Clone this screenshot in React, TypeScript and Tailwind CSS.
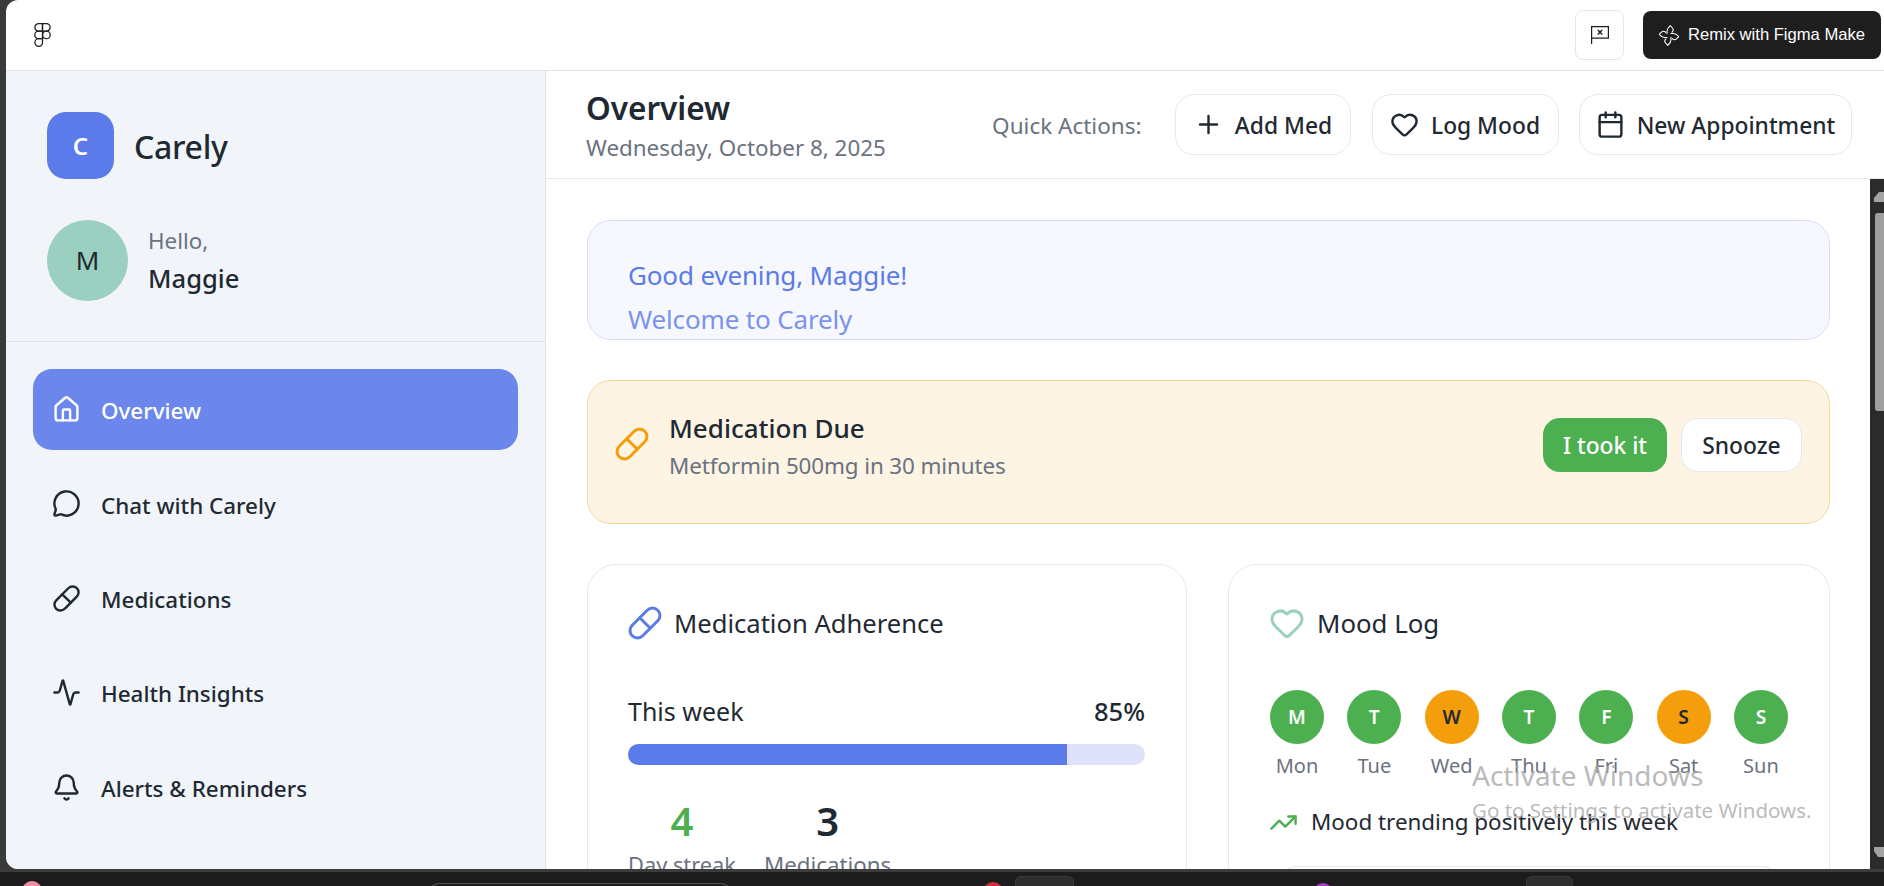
import React from 'react'
import {
  Activity,
  Bell,
  Calendar,
  Heart,
  House,
  MessageCircle,
  Pill,
  Plus,
  TrendingUp,
} from 'lucide-react'

const navItems = [
  { label: 'Overview', icon: House, active: true },
  { label: 'Chat with Carely', icon: MessageCircle },
  { label: 'Medications', icon: Pill },
  { label: 'Health Insights', icon: Activity },
  { label: 'Alerts & Reminders', icon: Bell },
]

const quickActions = [
  { label: 'Add Med', icon: Plus, width: 'w-[176px]' },
  { label: 'Log Mood', icon: Heart, width: 'w-[187px]' },
  { label: 'New Appointment', icon: Calendar, width: 'w-[273px]' },
]

const moods = [
  { letter: 'M', day: 'Mon', good: true },
  { letter: 'T', day: 'Tue', good: true },
  { letter: 'W', day: 'Wed', good: false },
  { letter: 'T', day: 'Thu', good: true },
  { letter: 'F', day: 'Fri', good: true },
  { letter: 'S', day: 'Sat', good: false },
  { letter: 'S', day: 'Sun', good: true },
]

function FigmaLogo() {
  return (
    <svg width="17" height="24" viewBox="0 0 17 24" fill="none" stroke="#1e1e1e" strokeWidth="1.3">
      <path d="M8.5 .7H4.6a3.7 3.7 0 0 0 0 7.4h3.9z" />
      <path d="M8.5 .7h3.9a3.7 3.7 0 0 1 0 7.4H8.5z" />
      <path d="M8.5 8.1H4.6a3.7 3.7 0 0 0 0 7.6h3.9z" />
      <circle cx="12.4" cy="11.9" r="3.8" />
      <path d="M8.5 15.7H4.6a3.8 3.8 0 1 0 3.9 3.8z" />
    </svg>
  )
}

function FlagIcon() {
  return (
    <svg width="18" height="18" viewBox="0 0 18 18" fill="none" stroke="#1e1e1e" strokeWidth="1.2">
      <path d="M.6 18V.6h16.8v11.6H.6" />
      <path d="M6.8 4l4.4 4.6M11.2 4L6.8 8.6" strokeWidth="1.4" />
    </svg>
  )
}

function RemixIcon() {
  const arm = 'M8 8.5V6.2C8 4 9.4 2.2 11.2.6l2.2 2.4c1.1 1.3.9 3-.3 4.2'
  return (
    <svg width="20" height="21" viewBox="0 0 20 21" fill="none" stroke="#ffffff" strokeWidth="1.1" strokeLinecap="round" strokeLinejoin="round">
      <path d={arm} />
      <path d={arm} transform="rotate(90 10 10.5)" />
      <path d={arm} transform="rotate(180 10 10.5)" />
      <path d={arm} transform="rotate(270 10 10.5)" />
    </svg>
  )
}

function ScrollArrow({ down }: { down?: boolean }) {
  return (
    <svg width="14" height="10" viewBox="0 0 14 10" className="ml-[4px] shrink-0">
      <path d={down ? 'M0 0h14v5l-3 5H4L0 4z' : 'M0 10h14V5L11 0H5L0 6z'} fill="#a3a3a3" />
    </svg>
  )
}

function Sidebar() {
  return (
    <aside className="w-[540px] shrink-0 bg-[#f1f5f9] border-r border-[#dfe3e8] rounded-bl-[12px] flex flex-col">
      <div className="h-[271px] shrink-0 border-b border-[#dfe3e8] pl-[41px] pt-[41px]">
        <div className="flex items-center gap-[20px]">
          <div className="w-[67px] h-[67px] rounded-[19px] bg-[#5b7bea] flex items-center justify-center text-white text-[24px] font-semibold">
            C
          </div>
          <span className="pt-[2px] text-[32px] font-medium text-[#1f2933] tracking-[-0.3px]">Carely</span>
        </div>
        <div className="flex items-center gap-[20px] mt-[41px]">
          <div className="w-[81px] h-[81px] rounded-full bg-[#9bd0c0] flex items-center justify-center text-[26px] text-[#1f2933]">
            M
          </div>
          <div className="flex flex-col -mt-[2px]">
            <span className="text-[22.4px] leading-[38px] text-[#6b7280]">Hello,</span>
            <span className="text-[25.6px] leading-[38px] font-medium text-[#1f2933]">Maggie</span>
          </div>
        </div>
      </div>
      <nav className="px-[27px] pt-[27px] flex flex-col gap-[13.4px]">
        {navItems.map(({ label, icon: Icon, active }) => (
          <div
            key={label}
            className={`h-[81px] rounded-[19px] flex items-center gap-[20px] pl-[19px] text-[22.4px] font-medium ${
              active ? 'bg-[#6b87eb] text-white' : 'text-[#1f2933]'
            }`}
          >
            <Icon size={29} />
            <span className="pt-[3px]">{label}</span>
          </div>
        ))}
      </nav>
    </aside>
  )
}

function Header() {
  return (
    <header className="h-[108px] shrink-0 border-b border-[#e8e8eb] flex items-center justify-between pl-[40px] pr-[32px]">
      <div className="flex flex-col mt-[7px]">
        <h1 className="text-[31.5px] leading-[40px] font-semibold text-[#1f2933]">Overview</h1>
        <p className="text-[22.4px] leading-[40px] text-[#6b7280]">Wednesday, October 8, 2025</p>
      </div>
      <div className="flex items-center gap-[20.5px]">
        <span className="pt-[3px] text-[22.5px] text-[#6b7280] mr-[13px]">Quick Actions:</span>
        {quickActions.map(({ label, icon: Icon, width }) => (
          <button
            key={label}
            className={`${width} h-[61px] rounded-[19px] border border-[#e9e9ec] bg-white flex items-center justify-center gap-[12px] text-[22.8px] font-medium text-[#1f2933]`}
          >
            <Icon size={29} />
            <span className="pt-[4px]">{label}</span>
          </button>
        ))}
      </div>
    </header>
  )
}

function AdherenceCard() {
  return (
    <section className="w-[600px] shrink-0 h-[400px] rounded-[29px] border border-[#e9e9ec] pl-[40px] pr-[41px] pt-[40px]">
      <div className="h-[36px] flex items-center gap-[11px] text-[#1f2933]">
        <Pill size={36} className="text-[#5b7bea] shrink-0 -ml-[1px]" />
        <h2 className="text-[25.6px] pt-[2px]">Medication Adherence</h2>
      </div>
      <div className="mt-[57px] h-[28px] flex items-center justify-between text-[#1f2933]">
        <span className="text-[25px]">This week</span>
        <span className="text-[25.6px] font-medium">85%</span>
      </div>
      <div className="mt-[18px] h-[21px] rounded-full bg-[#dee3fb] overflow-hidden">
        <div className="h-full w-[85%] bg-[#5b7bea]" />
      </div>
      <div className="mt-[32px] flex gap-[28px]">
        <div className="text-center">
          <div className="text-[40px] leading-[48px] font-semibold text-[#4caf50]">4</div>
          <div className="text-[21.8px] leading-[26px] mt-[7px] text-[#6b7280]">Day streak</div>
        </div>
        <div className="text-center">
          <div className="text-[40px] leading-[48px] font-semibold text-[#1f2933]">3</div>
          <div className="text-[22.3px] leading-[26px] mt-[7px] text-[#6b7280]">Medications</div>
        </div>
      </div>
    </section>
  )
}

function MoodCard() {
  return (
    <section className="flex-1 h-[400px] rounded-[29px] border border-[#e9e9ec] pl-[41px] pr-[41px] pt-[40px]">
      <div className="h-[36px] flex items-center gap-[12px] text-[#1f2933]">
        <Heart size={36} className="text-[#9bd0c0] shrink-0 -ml-[1px]" />
        <h2 className="text-[25.8px]">Mood Log</h2>
      </div>
      <div className="mt-[49px] flex justify-between">
        {moods.map((m) => (
          <div key={m.day} className="w-[54px] flex flex-col items-center">
            <div
              className={`w-[54px] h-[54px] rounded-full flex items-center justify-center text-[19.2px] font-semibold ${
                m.good ? 'bg-[#4caf50] text-white' : 'bg-[#f59e0b] text-[#1f2933]'
              }`}
            >
              {m.letter}
            </div>
            <span className="mt-[9px] text-[20px] leading-[26px] text-[#6b7280]">{m.day}</span>
          </div>
        ))}
      </div>
      <div className="mt-[29px] h-[28px] flex items-center gap-[13px] text-[22.4px] text-[#1f2933]">
        <TrendingUp size={29} className="text-[#4caf50] shrink-0 -ml-[1px]" />
        <span>Mood trending positively this week</span>
      </div>
      <div className="mt-[30px] mx-[8px] h-[80px] rounded-[19px] border border-[#e5e7eb]" />
    </section>
  )
}

function Content() {
  return (
    <div className="flex-1 min-h-0 flex">
      <main className="flex-1 min-w-0 overflow-hidden pl-[41px] pr-[40px] pt-[41px] flex flex-col gap-[40px]">
        <div className="h-[120px] shrink-0 rounded-[24px] border border-[#d8def9] bg-[#f7f8fd] px-[40px] pt-[32px] text-[26px] leading-[44px] text-[#5b7bea] tracking-[-0.15px]">
          <p>Good evening, Maggie!</p>
          <p className="opacity-80">Welcome to Carely</p>
        </div>
        <div className="h-[144px] shrink-0 rounded-[24px] border border-[#f8d89b] bg-[#fdf4e4] pl-[26px] pr-[27px] pt-[29px] flex items-start justify-between">
          <div className="flex gap-[19px]">
            <Pill size={36} className="text-[#f59e0b] shrink-0 mt-[16px]" />
            <div className="flex flex-col">
              <span className="text-[26px] leading-[37px] font-medium text-[#1f2933]">Medication Due</span>
              <span className="text-[22.4px] leading-[37px] text-[#6b7280] tracking-[-0.1px]">Metformin 500mg in 30 minutes</span>
            </div>
          </div>
          <div className="flex gap-[14px] mt-[8px]">
            <button className="w-[124px] h-[54px] rounded-[17px] bg-[#4caf50] text-white text-[22.8px] font-medium pt-[2px]">
              I took it
            </button>
            <button className="w-[121px] h-[54px] rounded-[17px] bg-white border border-[#e5e7eb] text-[#1f2933] text-[22.8px] font-medium pt-[2px]">
              Snooze
            </button>
          </div>
        </div>
        <div className="flex gap-[41px] shrink-0">
          <AdherenceCard />
          <MoodCard />
        </div>
      </main>
      <div className="w-[14px] shrink-0 bg-[#2b2b2b] flex flex-col pt-[13px] pb-[12px] overflow-hidden">
        <ScrollArrow />
        <div className="mt-[11px] ml-[5px] w-[9px] h-[198px] rounded-l-[3px] bg-[#9f9f9f]" />
        <div className="flex-1" />
        <ScrollArrow down />
      </div>
    </div>
  )
}

export default function App() {
  return (
    <div className="relative w-screen h-screen overflow-hidden bg-[#3a3a3a] font-['Noto_Sans',sans-serif] flex flex-col">
      <div className="flex-1 min-h-0 pl-[6px]">
        <div className="h-full rounded-tl-[12px] rounded-bl-[12px] bg-white flex flex-col overflow-hidden">
          <div className="h-[71px] shrink-0 border-b border-[#e3e3e3] flex items-center justify-between pl-[28px] pr-[3px]">
            <FigmaLogo />
            <div className="flex items-center gap-[19px]">
              <button className="w-[49px] h-[50px] rounded-[8px] border border-[#e6e6e6] flex items-center justify-center">
                <FlagIcon />
              </button>
              <button className="w-[238px] h-[48px] rounded-[8px] bg-[#1e1e1e] flex items-center justify-center gap-[9px] text-white text-[16.6px] font-['Liberation_Sans',sans-serif]">
                <RemixIcon />
                Remix with Figma Make
              </button>
            </div>
          </div>
          <div className="flex-1 min-h-0 flex">
            <Sidebar />
            <div className="flex-1 min-w-0 flex flex-col">
              <Header />
              <Content />
            </div>
          </div>
        </div>
      </div>

      <div className="h-[17px] shrink-0 border-t-[3px] border-[#3c3c3c] bg-[#1c1c1c] flex overflow-hidden">
        <div className="ml-[22px] mt-[9px] w-[20px] h-[20px] rounded-full bg-[#f48ba0]" />
        <div className="ml-[384px] mt-[11px] w-[308px] h-[20px] rounded-t-[14px] border-t border-x border-[#555555]" />
        <div className="ml-[249px] mt-[10px] w-[20px] h-[20px] rounded-full bg-[#d0303c]" />
        <div className="ml-[12px] mt-[4px] w-[59px] h-[20px] rounded-t-[6px] bg-[#2e2e2e] border border-[#3a3a3a]" />
        <div className="ml-[239px] mt-[11px] w-[20px] h-[20px] rounded-full bg-[#a53fc0]" />
        <div className="ml-[193px] mt-[4px] w-[47px] h-[20px] rounded-t-[6px] bg-[#2e2e2e] border border-[#3a3a3a]" />
      </div>

      <div className="absolute left-[1472px] top-[757px] pointer-events-none text-[#a8a8a8]/80">
        <div className="text-[28px] leading-[36px]">Activate Windows</div>
        <div className="text-[20.5px] leading-[24px] mt-[5px]">Go to Settings to activate Windows.</div>
      </div>
    </div>
  )
}
